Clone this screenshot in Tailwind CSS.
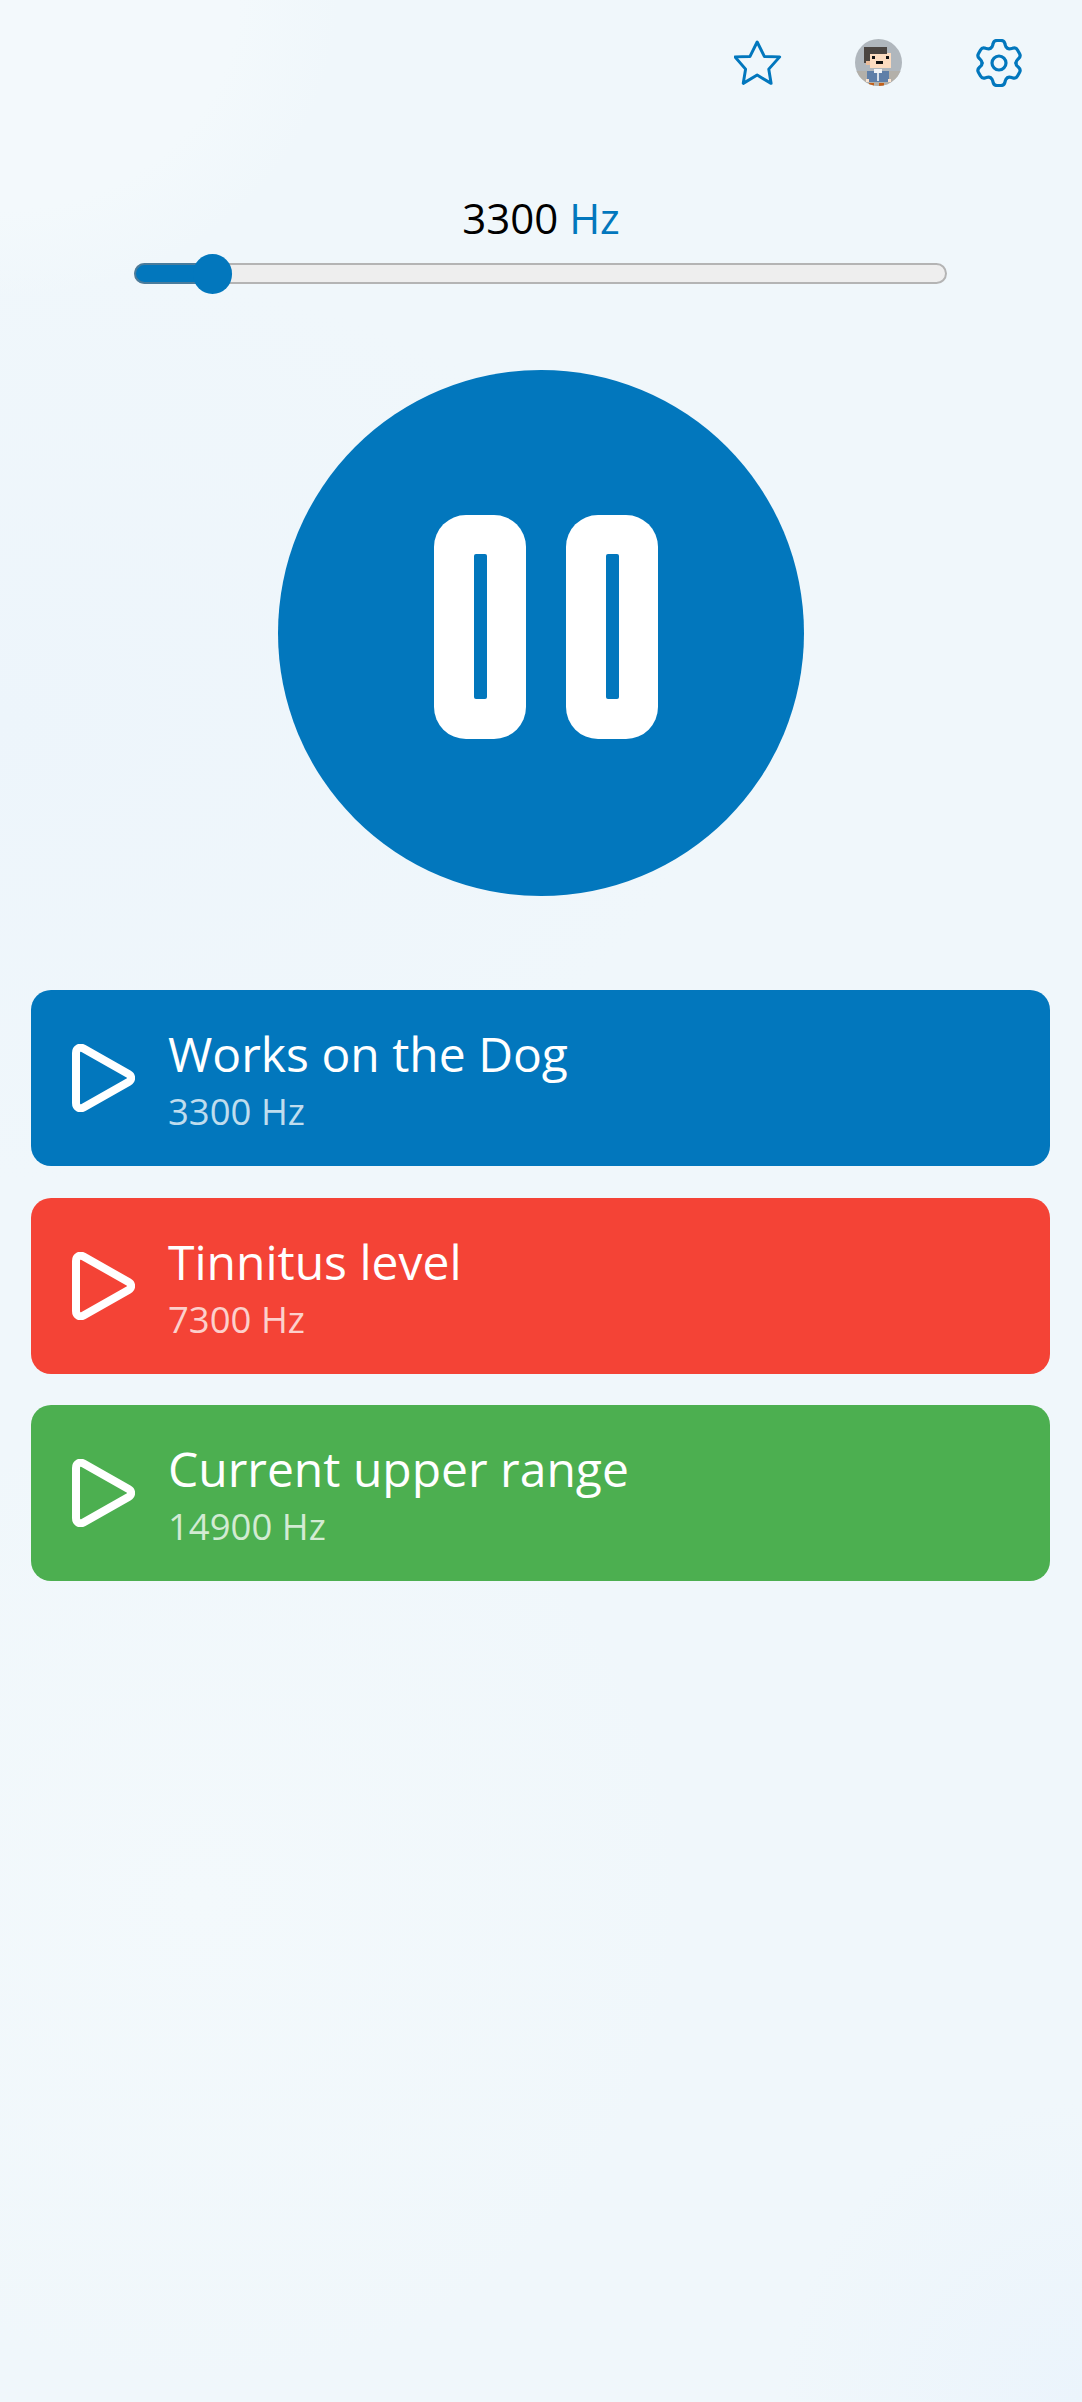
<!DOCTYPE html>
<html lang="en">
<head>
    <meta charset="UTF-8">
    <meta name="viewport" content="width=device-width, initial-scale=1.0">
    <title>Tone generator</title>
    <script src="https://cdn.jsdelivr.net/npm/@tailwindcss/browser@4"></script>
</head>
<body class="w-[1082px] h-[2402px] overflow-hidden font-['Open_Sans',sans-serif] bg-[#f0f7fb] bg-[radial-gradient(ellipse_340px_300px_at_0px_0px,#f3f9fc_70%,transparent),radial-gradient(ellipse_720px_460px_at_0px_720px,#edf5fb,transparent),radial-gradient(ellipse_500px_500px_at_200px_1900px,#f3f9fc,transparent),radial-gradient(ellipse_300px_300px_at_1082px_2402px,#ebf4fc,transparent)]">

    <!-- top icons -->
    <div class="flex justify-end gap-[73px] pt-[39px] pr-[59px]">
        <svg class="w-[48px] h-[47px] text-[#0277bd]" viewBox="105 60 145 140" fill="none" stroke="currentColor" stroke-width="9" stroke-linejoin="round">
            <path d="M175 68 L197 112 L243 113 L210 150 L217 193 L175 168 L133 193 L140 150 L108 113 L153 112 Z"/>
        </svg>
        <svg class="w-[47px] h-[47px] rounded-full" viewBox="0 0 47 47">
            <rect width="47" height="47" fill="#b0b7bd"/>
            <rect y="32" width="47" height="15" fill="#b3b0a9"/>
            <rect x="15" y="14" width="21" height="15" fill="#fcdcc0"/>
            <rect x="9" y="8" width="23" height="7" fill="#4b4541"/>
            <rect x="9" y="14" width="6" height="10" fill="#4b4541"/>
            <rect x="11" y="22" width="4" height="4" fill="#e9bd9c"/>
            <rect x="17" y="17" width="3" height="3" fill="#111"/>
            <rect x="31" y="17" width="3" height="3" fill="#111"/>
            <rect x="21" y="22" width="7" height="3" fill="#111"/>
            <rect x="12" y="32" width="22" height="11" fill="#5f7fa8"/>
            <rect x="19" y="30" width="8" height="4" fill="#f2f4f6"/>
            <rect x="22" y="34" width="2" height="8" fill="#d9e0e8"/>
            <rect x="11" y="40" width="3" height="3" fill="#fbe3cf"/>
            <rect x="33" y="40" width="3" height="3" fill="#fbe3cf"/>
            <rect x="14" y="44" width="5" height="3" fill="#c2601a"/>
            <rect x="24" y="44" width="5" height="3" fill="#c2601a"/>
        </svg>
        <svg class="w-[48px] h-[48px] text-[#0277bd]" viewBox="-24 -24 48 48" fill="none" stroke="currentColor" stroke-width="3.2" stroke-linecap="round">
            <circle r="7"/>
            <path d="M-8.5 -14.7 C-6.5 -15.5 -6.5 -17 -6 -19 C-5.5 -22 -4 -22.5 -2 -22.5 L2 -22.5 C4 -22.5 5.5 -22 6 -19 C6.5 -17 6.5 -15.5 8.5 -14.7"/>
            <path transform="rotate(60)" d="M-8.5 -14.7 C-6.5 -15.5 -6.5 -17 -6 -19 C-5.5 -22 -4 -22.5 -2 -22.5 L2 -22.5 C4 -22.5 5.5 -22 6 -19 C6.5 -17 6.5 -15.5 8.5 -14.7"/>
            <path transform="rotate(120)" d="M-8.5 -14.7 C-6.5 -15.5 -6.5 -17 -6 -19 C-5.5 -22 -4 -22.5 -2 -22.5 L2 -22.5 C4 -22.5 5.5 -22 6 -19 C6.5 -17 6.5 -15.5 8.5 -14.7"/>
            <path transform="rotate(180)" d="M-8.5 -14.7 C-6.5 -15.5 -6.5 -17 -6 -19 C-5.5 -22 -4 -22.5 -2 -22.5 L2 -22.5 C4 -22.5 5.5 -22 6 -19 C6.5 -17 6.5 -15.5 8.5 -14.7"/>
            <path transform="rotate(240)" d="M-8.5 -14.7 C-6.5 -15.5 -6.5 -17 -6 -19 C-5.5 -22 -4 -22.5 -2 -22.5 L2 -22.5 C4 -22.5 5.5 -22 6 -19 C6.5 -17 6.5 -15.5 8.5 -14.7"/>
            <path transform="rotate(300)" d="M-8.5 -14.7 C-6.5 -15.5 -6.5 -17 -6 -19 C-5.5 -22 -4 -22.5 -2 -22.5 L2 -22.5 C4 -22.5 5.5 -22 6 -19 C6.5 -17 6.5 -15.5 8.5 -14.7"/>
        </svg>
    </div>

    <!-- frequency -->
    <p class="mt-[102px] text-center text-[42px] leading-[57px] text-black">3300 <span class="text-[#0277bd]">Hz</span></p>

    <!-- slider -->
    <div class="relative mt-[17px] ml-[134px] mr-[135px] h-[21px] rounded-full bg-[#eeeeee] border-2 border-[#b4b4b4]">
        <div class="h-[21px] -mt-[2px] -ml-[2px] w-[80px] rounded-l-full bg-[#0277bd] border-2 border-r-0 border-[#4a7c9c]"></div>
        <div class="absolute left-[57px] top-[-11px] w-[39px] h-[40px] rounded-full bg-[#0277bd]"></div>
    </div>

    <!-- play / pause -->
    <div class="mt-[86px] mx-auto w-[526px] h-[526px] rounded-full bg-[#0277bd] flex items-center justify-center gap-[40px] pl-[10px] pb-[13px]">
        <div class="w-[92px] h-[224px] rounded-[32px] bg-white flex items-center justify-center">
            <div class="w-[13px] h-[145px] rounded-[2px] bg-[#0277bd]"></div>
        </div>
        <div class="w-[92px] h-[224px] rounded-[32px] bg-white flex items-center justify-center">
            <div class="w-[13px] h-[145px] rounded-[2px] bg-[#0277bd]"></div>
        </div>
    </div>

    <!-- presets -->
    <div class="mt-[94px] ml-[31px] mr-[32px] flex flex-col gap-[31.5px]">
        <div class="h-[176px] rounded-[20px] bg-[#0277bd] flex items-center pl-[41px] gap-[33px] text-white">
            <svg class="w-[63px] h-[68px] shrink-0" viewBox="0 0 63 68" fill="none" stroke="currentColor" stroke-width="8">
                <path d="M4 9 C4 4.5 8 2.5 11.5 4.5 L56.5 30 C60 32 60 36 56.5 38 L11.5 63.5 C8 65.5 4 63.5 4 59 Z"/>
            </svg>
            <div class="pt-[3px]">
                <p class="text-[48px] leading-[60px]">Works on the Dog</p>
                <p class="mt-[3px] text-[36.5px] leading-[48px] text-white/75">3300 Hz</p>
            </div>
        </div>
        <div class="h-[176px] rounded-[20px] bg-[#f44336] flex items-center pl-[41px] gap-[33px] text-white">
            <svg class="w-[63px] h-[68px] shrink-0" viewBox="0 0 63 68" fill="none" stroke="currentColor" stroke-width="8">
                <path d="M4 9 C4 4.5 8 2.5 11.5 4.5 L56.5 30 C60 32 60 36 56.5 38 L11.5 63.5 C8 65.5 4 63.5 4 59 Z"/>
            </svg>
            <div class="pt-[3px]">
                <p class="text-[48px] leading-[60px]">Tinnitus level</p>
                <p class="mt-[3px] text-[36.5px] leading-[48px] text-white/75">7300 Hz</p>
            </div>
        </div>
        <div class="h-[176px] rounded-[20px] bg-[#4caf50] flex items-center pl-[41px] gap-[33px] text-white">
            <svg class="w-[63px] h-[68px] shrink-0" viewBox="0 0 63 68" fill="none" stroke="currentColor" stroke-width="8">
                <path d="M4 9 C4 4.5 8 2.5 11.5 4.5 L56.5 30 C60 32 60 36 56.5 38 L11.5 63.5 C8 65.5 4 63.5 4 59 Z"/>
            </svg>
            <div class="pt-[3px]">
                <p class="text-[48px] leading-[60px]">Current upper range</p>
                <p class="mt-[3px] text-[36.5px] leading-[48px] text-white/75">14900 Hz</p>
            </div>
        </div>
    </div>

</body>
</html>
